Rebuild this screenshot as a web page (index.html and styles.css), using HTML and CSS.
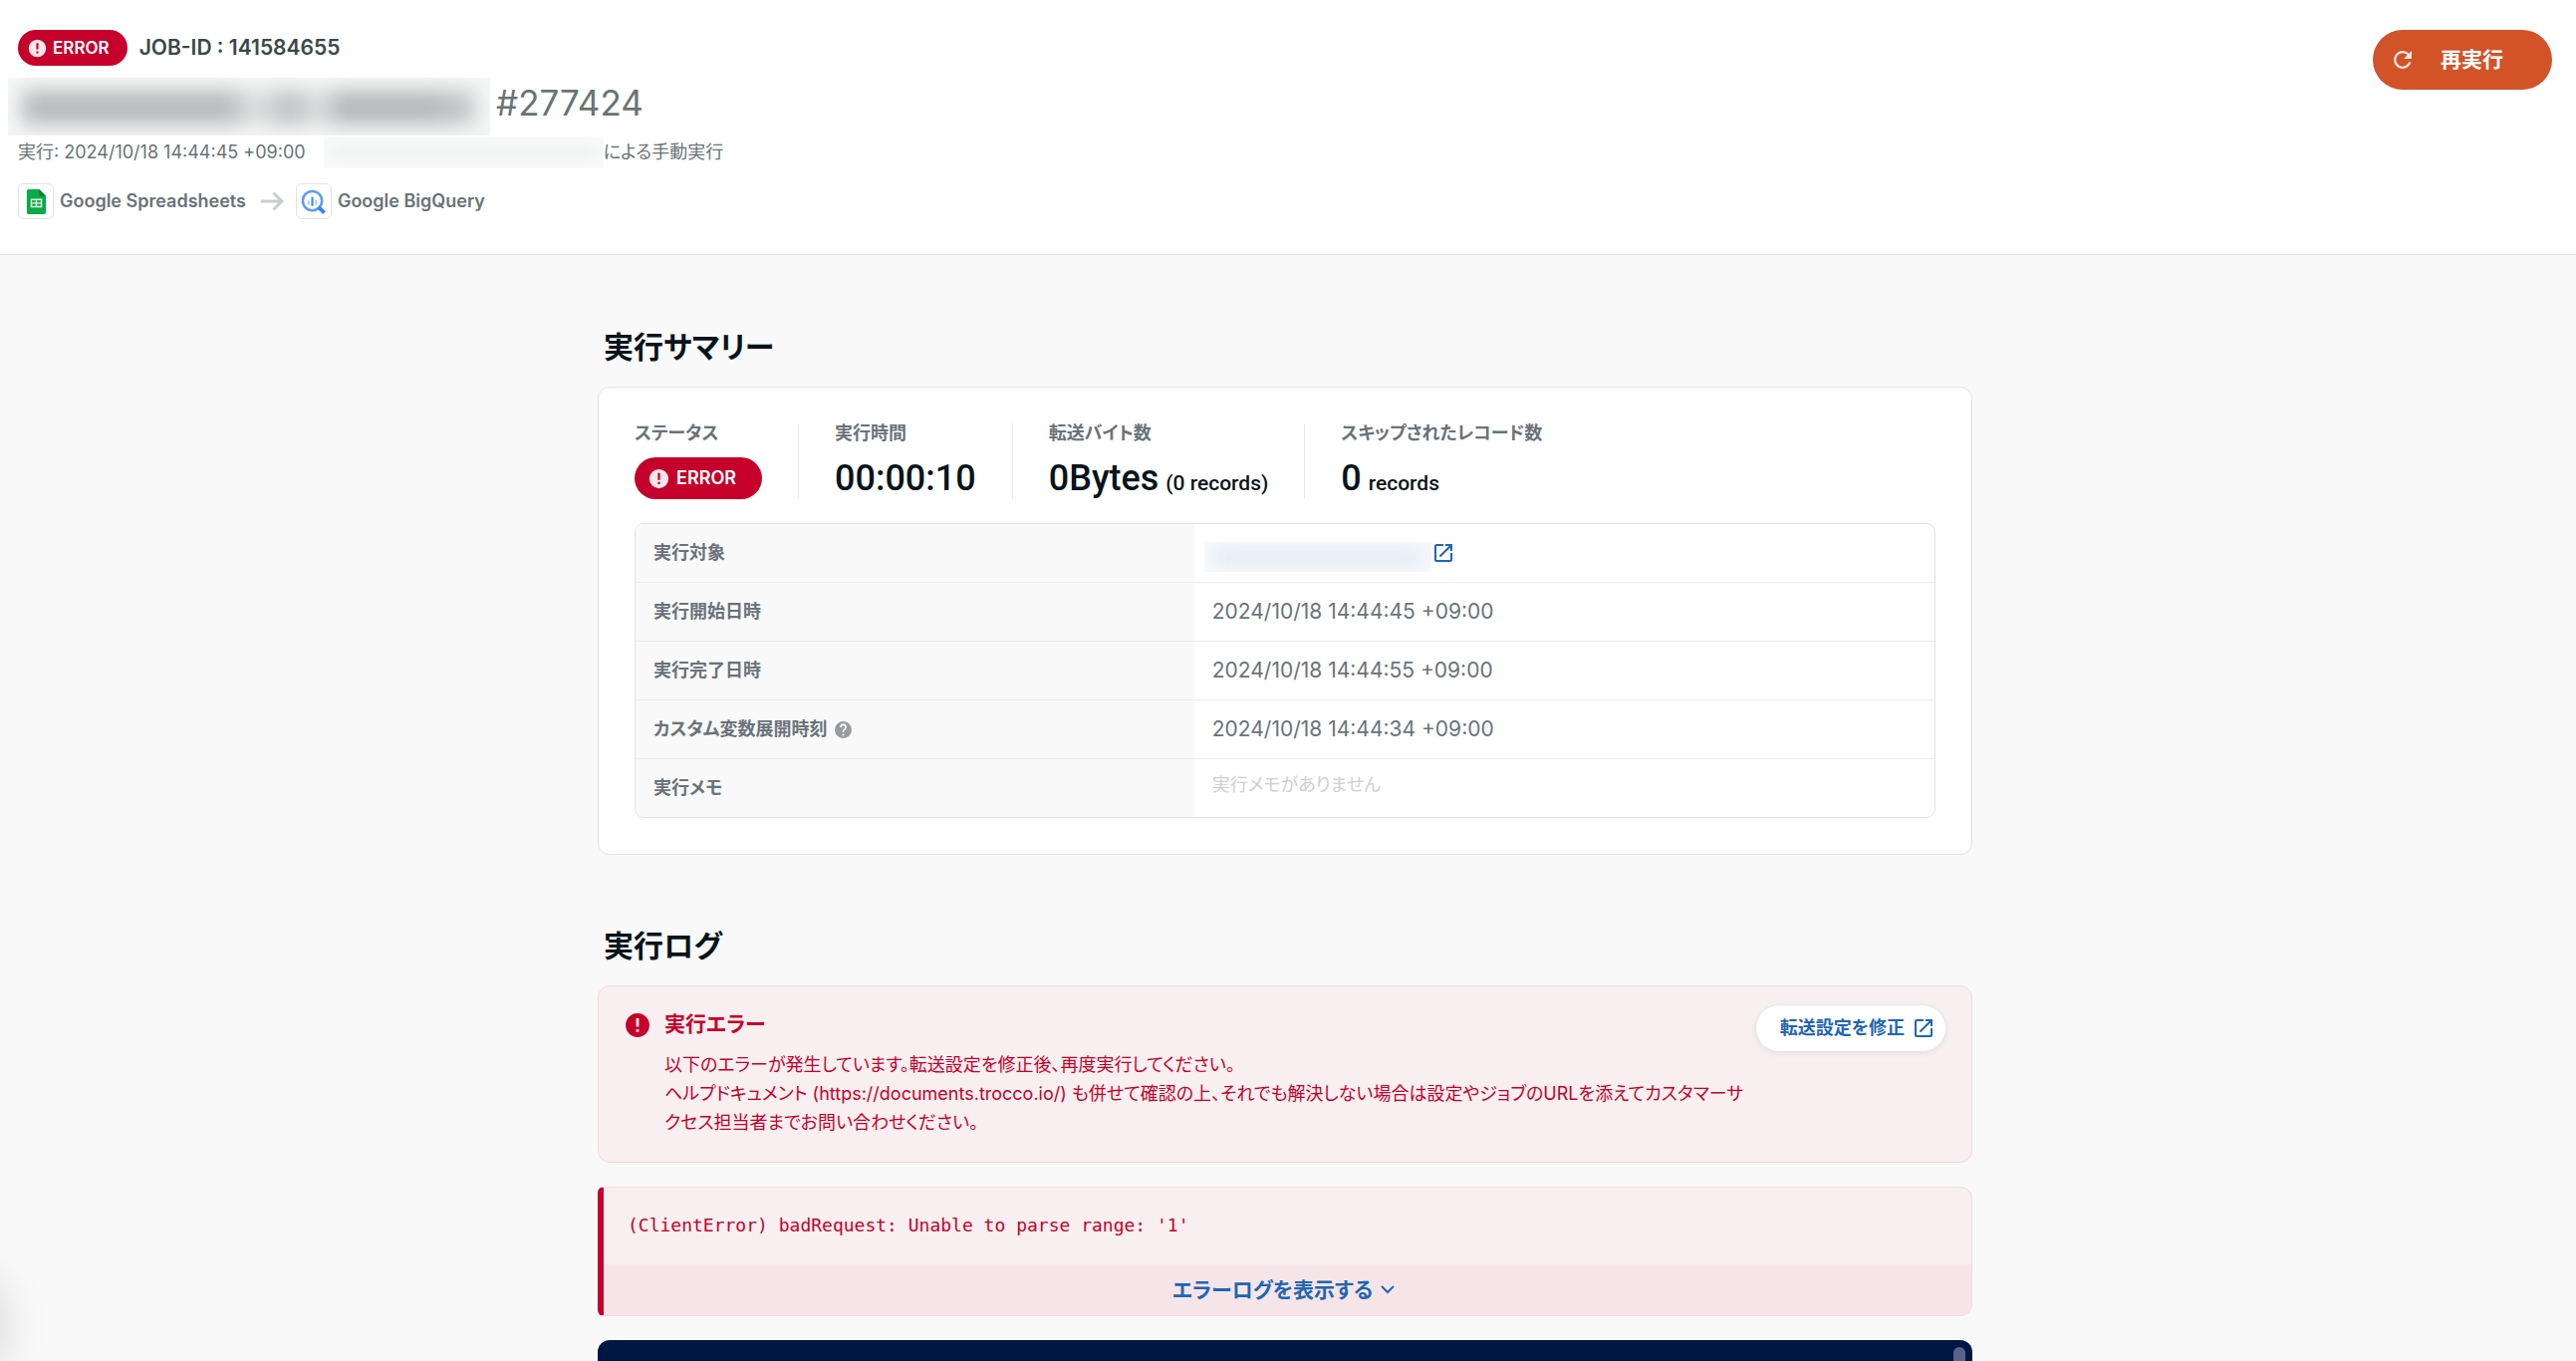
FILE: index.html
```html
<!DOCTYPE html>
<html lang="ja">
<head>
<meta charset="utf-8">
<title>ジョブ詳細</title>
<link rel="stylesheet" href="styles.css">
</head>
<body>
<svg class="defs" aria-hidden="true">
  <symbol id="i-alert" viewBox="0 0 24 24"><path fill-rule="evenodd" d="M12 1a11 11 0 1 0 0 22 11 11 0 0 0 0-22zm-1.300 4.500h2.600v7.800h-2.600zm0 10.200h2.600v2.600h-2.600z"/></symbol>
  <symbol id="i-open" viewBox="0 0 24 24"><path d="M19 19H5V5h7V3H5a2 2 0 0 0-2 2v14a2 2 0 0 0 2 2h14a2 2 0 0 0 2-2v-7h-2v7zM14 3v2h3.590l-9.830 9.830 1.410 1.410L19 6.410V10h2V3h-7z"/></symbol>
</svg>

<header class="job-header">
  <div class="job-info">
    <div class="job-id">
      <span class="badge"><svg><use href="#i-alert"/></svg>ERROR</span>
      <span>JOB-ID : 141584655</span>
    </div>
    <h1 class="job-title"><span class="redacted redacted-title"><i></i></span>#277424</h1>
    <p class="job-meta"><span>実行: 2024/10/18 14:44:45 +09:00</span><span class="redacted redacted-user"><i></i></span><span>による手動実行</span></p>
    <div class="job-route">
      <span class="service-icon"><svg viewBox="0 0 20 26"><path fill="#0aaa47" d="M2 0h11l7 7v17a2 2 0 0 1-2 2H2a2 2 0 0 1-2-2V2a2 2 0 0 1 2-2z"/><path fill="#05803a" d="M13 0l7 7h-7z"/><path fill="#e6f6ec" fill-rule="evenodd" d="M4 10h12v9H4zm1.500 1.500v2.200h3.700v-2.200zm5.200 0v2.200h3.800v-2.200zm-5.200 3.700v2.300h3.700v-2.300zm5.200 0v2.300h3.800v-2.300z"/></svg></span>
      <span class="service-name">Google Spreadsheets</span>
      <svg class="arrow" viewBox="0 0 24 20"><path d="M1 10h21M13.500 1.500L22 10l-8.500 8.500"/></svg>
      <span class="service-icon"><svg viewBox="0 0 26 26"><circle cx="12" cy="12" r="10" fill="none" stroke="#5f9af5" stroke-width="2.600"/><path stroke="#4285f4" stroke-width="2.200" d="M12 8v9.500"/><path stroke="#a9c8fa" stroke-width="2" d="M8 12v4M16 11v5"/><path stroke="#3f80ee" stroke-width="4" d="M18.500 18.500l6 6"/></svg></span>
      <span class="service-name">Google BigQuery</span>
    </div>
  </div>
  <button class="rerun" type="button"><svg viewBox="3 3 18 18"><path d="M17.650 6.350A7.960 7.960 0 0 0 12 4a8 8 0 1 0 7.730 10h-2.080A6 6 0 1 1 12 6c1.660 0 3.140.690 4.220 1.780L13 11h7V4z"/></svg><span>再実行</span></button>
</header>

<main class="content">
  <section>
    <h2>実行サマリー</h2>
    <div class="card">
      <div class="stats">
        <div class="stat"><span class="stat-label">ステータス</span><span class="badge badge-large"><svg><use href="#i-alert"/></svg>ERROR</span></div>
        <div class="stat"><span class="stat-label">実行時間</span><strong>00:00:10</strong></div>
        <div class="stat"><span class="stat-label">転送バイト数</span><strong>0Bytes <small>(0 records)</small></strong></div>
        <div class="stat"><span class="stat-label">スキップされたレコード数</span><strong>0 <small>records</small></strong></div>
      </div>
      <div class="table-frame">
        <table>
          <tr><th scope="row">実行対象</th><td><a class="target" href="#target" aria-label="実行対象を開く"><span class="redacted redacted-target"><i></i></span><svg><use href="#i-open"/></svg></a></td></tr>
          <tr><th scope="row">実行開始日時</th><td>2024/10/18 14:44:45 +09:00</td></tr>
          <tr><th scope="row">実行完了日時</th><td>2024/10/18 14:44:55 +09:00</td></tr>
          <tr><th scope="row"><span class="with-help">カスタム変数展開時刻<svg viewBox="2 2 20 20"><path d="M12 2a10 10 0 1 0 0 20 10 10 0 0 0 0-20zm1 17h-2v-2h2v2zm2.070-7.750l-.9.920C13.450 12.900 13 13.500 13 15h-2v-.5c0-1.100.450-2.100 1.170-2.830l1.240-1.260A2 2 0 1 0 10 9H8a4 4 0 1 1 7.070 2.250z"/></svg></span></th><td>2024/10/18 14:44:34 +09:00</td></tr>
          <tr><th scope="row">実行メモ</th><td class="empty">実行メモがありません</td></tr>
        </table>
      </div>
    </div>
  </section>

  <section class="logs">
    <h2>実行ログ</h2>
    <div class="alert">
      <svg class="alert-icon"><use href="#i-alert"/></svg>
      <div class="alert-body">
        <h3>実行エラー</h3>
        <p>以下のエラーが発生しています。転送設定を修正後、再度実行してください。<br>ヘルプドキュメント (https://documents.trocco.io/) も併せて確認の上、それでも解決しない場合は設定やジョブのURLを添えてカスタマーサクセス担当者までお問い合わせください。</p>
      </div>
      <a class="fix-link" href="#settings">転送設定を修正<svg><use href="#i-open"/></svg></a>
    </div>
    <div class="trace">
      <code>(ClientError) badRequest: Unable to parse range: '1'</code>
      <button class="toggle" type="button">エラーログを表示する<svg viewBox="0 0 14 9"><path d="M1 1l6 6 6-6"/></svg></button>
    </div>
    <div class="console"><span class="thumb"></span></div>
  </section>
</main>
<div class="edge-shadow"></div>
</body>
</html>
```

FILE: styles.css
```css
* { box-sizing: border-box; margin: 0; }
body {
  min-height: 100vh;
  display: flex;
  flex-direction: column;
  background: #f9f9f9;
  color: #69737a;
  font-family: Inter, "Noto Sans CJK JP", sans-serif;
  font-feature-settings: "palt";
  font-size: 18px;
  line-height: 28px;
}
.defs { display: none; }
svg { flex: none; fill: currentColor; }
button { border: 0; cursor: pointer; font: inherit; font-feature-settings: inherit; }
a { text-decoration: none; }

.job-header {
  display: flex;
  justify-content: space-between;
  align-items: flex-start;
  padding: 30px 24px 35px 18px;
  background: #fff;
  border-bottom: 1px solid #e2e3e4;
  color: #697376;
}
.job-id { display: flex; align-items: center; gap: 12px; font-size: 21px; font-weight: 600; color: #3b474d; }
.badge {
  display: inline-flex;
  align-items: center;
  gap: 6px;
  height: 36px;
  padding: 0 18px 0 10px;
  border-radius: 21px;
  background: #c5002b;
  color: #fff;
  font-size: 17px;
  font-weight: 600;
}
.badge svg { width: 19px; height: 19px; opacity: .9; }
.badge-large { height: 42px; gap: 7px; padding: 0 26px 0 14px; font-size: 18px; }
.badge-large svg { width: 21px; height: 21px; }

.redacted { display: block; flex: none; overflow: hidden; }
.redacted i { display: block; height: 100%; }
.redacted-title { width: 484px; height: 58px; margin-left: -10px; padding: 13px 14px 11px; background: #f6f7f7; }
.redacted-title i {
  background: linear-gradient(90deg, #b6babb 0 46%, #dadcdc 50% 54%, #bfc3c4 56% 61%, #dadcdc 64% 67%, #b4b8b9 69% 90%, #c9cccd);
  filter: blur(10px);
}
.redacted-user { width: 281px; height: 32px; padding: 8px; margin-left: 18px; background: #f9fafa; }
.redacted-user i { background: #f1f3f3; filter: blur(6px); }
.job-title { display: flex; align-items: flex-start; gap: 6px; margin-top: 12px; font-size: 35px; line-height: 50px; font-weight: 400; }
.job-meta { display: flex; align-items: center; height: 30px; margin-top: 2px; }
.job-route { display: flex; align-items: center; margin-top: 16px; }
.service-icon { display: grid; place-items: center; width: 36px; height: 36px; border: 1px solid #e2e4e4; border-radius: 6px; }
.service-icon svg { height: 25px; width: 25px; }
.service-name { margin-left: 6px; font-weight: 600; }
.arrow { width: 24px; height: 20px; margin: 0 12px 0 14px; fill: none; stroke: #c9cdcf; stroke-width: 3; }
.rerun {
  display: flex;
  align-items: center;
  width: 180px;
  height: 60px;
  padding: 0 20px;
  gap: 28px;
  border-radius: 30px;
  background: #d15327;
  color: #fff;
  font-size: 21px;
  font-weight: 600;
}
.rerun svg { width: 20px; height: 20px; opacity: .88; }

.content {
  flex: 1;
  display: flex;
  flex-direction: column;
  align-self: center;
  width: 100%;
  max-width: 1386px;
  padding: 70px 6px 0 0;
}
h2 { padding-left: 6px; margin-bottom: 17px; font-size: 30px; line-height: 45px; font-weight: 600; color: #07141a; }
.card { padding: 36px; background: #fff; border: 1px solid #e2e3e3; border-radius: 12px; }
.stats { display: flex; margin-bottom: 24px; }
.stat { display: flex; flex-direction: column; align-items: flex-start; gap: 14px; height: 76px; padding: 0 36px; border-right: 1px solid #e9eaea; white-space: nowrap; }
.stat:first-child { padding-left: 0; }
.stat:last-child { border: 0; }
.stat-label { line-height: 20px; font-weight: 600; }
.stat .badge { flex: none; }
strong { font: 500 36px/42px Roboto, sans-serif; color: #07141a; }
small { font-size: 21px; margin-left: -2px; }
.table-frame { overflow: hidden; border: 1px solid #e2e3e3; border-radius: 9px; }
table { width: 100%; border-spacing: 0; table-layout: fixed; font-size: 21px; }
th { width: 43%; background: #f9f9f9; font-size: 18px; text-align: left; font-weight: 600; }
th, td { height: 59px; padding: 0 18px; border-bottom: 1px solid #ececec; }
tr:last-child > * { height: 58px; border-bottom: 0; }
.target { display: flex; align-items: center; margin-left: -8px; color: #1f66b3; }
.target svg { width: 24px; height: 24px; }
.redacted-target { width: 228px; height: 30px; margin-top: 8px; padding: 7px 10px; background: #f7f9fb; }
.redacted-target i { background: #e2eaf3; filter: blur(8px); }
.with-help { display: flex; align-items: center; gap: 7px; }
.with-help svg { width: 17px; height: 17px; color: #979c9f; }
td.empty { color: #cdd0d2; font-size: 18px; padding-bottom: 6px; }

.logs { flex: 1; display: flex; flex-direction: column; margin-top: 69px; }
.alert { display: flex; align-items: flex-start; min-height: 178px; padding: 18px 25px 24px 26px; background: #f8eff0; border: 1px solid #f5d9df; border-radius: 12px; color: #c5002b; }
.alert-icon { width: 26px; height: 26px; margin-top: 8px; }
.alert-body { flex: 1; margin: 4px auto 0 14px; max-width: 1086px; }
.alert-body h3 { font-size: 21px; line-height: 32px; font-weight: 600; }
.alert-body p { margin-top: 10px; line-height: 29px; word-break: break-all; }
.fix-link { display: flex; align-items: center; gap: 7px; height: 48px; padding: 0 10px 0 24px; border: 1px solid #e4e6e8; border-radius: 24px; background: #fff; box-shadow: 0 2px 6px rgba(0, 0, 0, .06); color: #1f66b3; font-weight: 600; white-space: nowrap; }
.fix-link svg { width: 24px; height: 24px; }
.trace { margin-top: 24px; overflow: hidden; background: #f8eff0; border: 1px solid #f5d9df; border-left: 6px solid #c5002b; border-radius: 6px 12px 12px 6px; }
.trace code { display: block; padding: 24px 24px 25px; font: 18px/28px "DejaVu Sans Mono", monospace; color: #c5002b; }
.toggle { display: flex; align-items: center; justify-content: center; gap: 8px; width: 100%; height: 51px; padding-right: 14px; background: #f6e5e8; color: #1f66b3; font-size: 21px; font-weight: 600; }
.toggle svg { width: 14px; height: 9px; fill: none; stroke: currentColor; stroke-width: 2; }
.console { flex: 1; display: flex; justify-content: flex-end; margin-top: 24px; padding: 7px 7px 0; background: #001743; border-radius: 12px 12px 0 0; }
.thumb { width: 12px; background: #566587; border-radius: 6px 6px 0 0; }
.edge-shadow { position: fixed; left: -60px; bottom: -10px; width: 60px; height: 90px; border-radius: 30px; box-shadow: 0 0 48px rgba(0, 0, 0, .16); }
```
